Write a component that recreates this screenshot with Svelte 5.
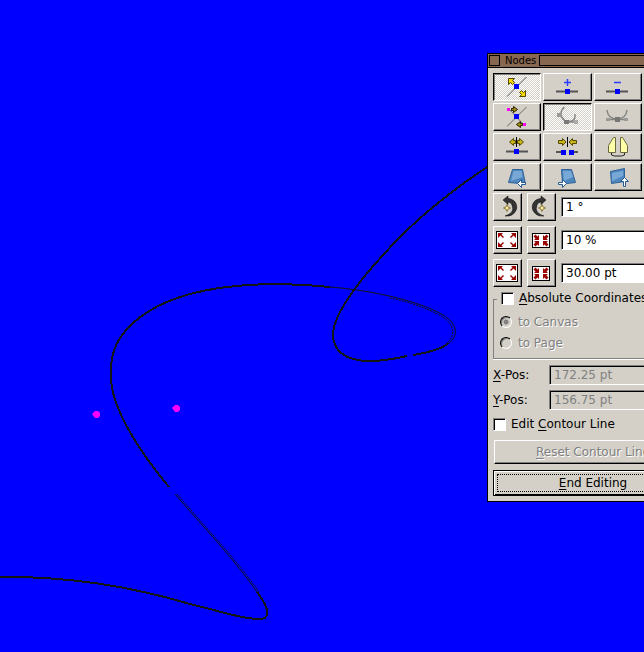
<script lang="ts">
	const tools = [
		{ icon: 'move', label: 'Move node', pressed: true },
		{ icon: 'add', label: 'Add node' },
		{ icon: 'remove', label: 'Delete node' },
		{ icon: 'control', label: 'Move control point' },
		{ icon: 'smooth', label: 'Smooth node', pressed: true, disabled: true },
		{ icon: 'symmetric', label: 'Symmetric node', disabled: true },
		{ icon: 'split', label: 'Split node' },
		{ icon: 'join', label: 'Join nodes' },
		{ icon: 'mirror', label: 'Mirror' },
		{ icon: 'shear-left', label: 'Shear left' },
		{ icon: 'shear-right', label: 'Shear right' },
		{ icon: 'shear-up', label: 'Shear up' }
	];

	let steps = $state([
		{ kind: 'rotate', label: 'Rotation step', less: 'Rotate left', more: 'Rotate right', value: '1 °' },
		{ kind: 'scale', label: 'Zoom factor', less: 'Enlarge', more: 'Shrink', value: '10 %' },
		{ kind: 'scale', label: 'Step size', less: 'Grow by step', more: 'Shrink by step', value: '30.00 pt' }
	]);

	let absolute = $state(false);
	let editContour = $state(false);
	let origin = $state('canvas');

	// the four corner arrows are one shape, flipped
	const growFlips = ['', 'translate(24 0) scale(-1 1)', 'translate(0 24) scale(1 -1)', 'translate(24 24) scale(-1 -1)'];
	const shrinkFlips = ['', 'translate(24 0) scale(-1 1)', 'translate(0 25) scale(1 -1)', 'translate(24 25) scale(-1 -1)'];
</script>

{#snippet toolIcon(name: string)}
	<svg width="24" height="24" viewBox="0 0 24 24" aria-hidden="true">
		{#if name === 'move'}
			<path d="M2 21.500L21.500 2" stroke="#555" fill="none" />
			<rect x="9" y="9" width="5" height="5" fill="#00f" />
			<path d="M3.500 3.500h6l-2 2 2 2-2 2-2-2-2 2z" fill="#f4d800" stroke="#554800" />
			<path d="M20.500 21.500h-6l2-2-2-2 2-2 2 2 2-2z" fill="#f4d800" stroke="#554800" />
		{:else if name === 'add' || name === 'remove'}
			<path d={name === 'add' ? 'M8 7.500h7M11.500 4v7' : 'M8 7.500h7'} stroke="#2a3cff" stroke-width="1.500" fill="none" />
			<path d="M0 16.500h22" stroke="#555" stroke-width="2" />
			<rect x="9" y="14" width="5" height="5" fill="#00f" />
		{:else if name === 'control'}
			<path d="M2 21.500L21.500 2M5 5l14 15" stroke="#666" fill="none" />
			<rect x="9" y="9" width="5" height="5" fill="#00f" />
			<rect x="2" y="3" width="3" height="3" fill="#f0f" />
			<rect x="18" y="18" width="3" height="3" fill="#f0f" />
			<path d="M6.500 3.500h2v-2l4 3-4 3v-2h-2z" fill="#a08c10" stroke="#2b2400" />
			<path d="M17.500 18.500h-2v-2l-4 3 4 3v-2h2z" fill="#a08c10" stroke="#2b2400" />
		{:else if name === 'smooth'}
			<path d="M8.500 2Q1 9 9 16Q20 18 19 9M3 9l7 8h12" stroke="#858582" stroke-width="1.500" fill="none" />
			<rect x="8" y="15" width="5" height="4" fill="#777" />
			<rect x="1" y="8" width="5" height="4" fill="#999" />
			<rect x="18" y="15" width="4" height="4" fill="#aaa" />
		{:else if name === 'symmetric'}
			<path d="M1 5Q2 14 11 14T21 5M0 14.500h22" stroke="#85857f" stroke-width="1.500" fill="none" />
			<rect x="9" y="12" width="5" height="5" fill="#777" />
			<rect x="0" y="13" width="4" height="3" fill="#999" />
			<rect x="18" y="13" width="4" height="3" fill="#999" />
		{:else if name === 'split'}
			<path d="M1 16.500h22" stroke="#555" stroke-width="2" />
			<rect x="9" y="14" width="5" height="5" fill="#00f" />
			<path d="M11.500 2v10" stroke="#000" />
			<path d="M4.500 7l4-3.500v2h2v3h-2v2z" fill="#c8b414" stroke="#554a00" />
			<path d="M18.500 7l-4-3.500v2h-2v3h2v2z" fill="#c8b414" stroke="#554a00" />
		{:else if name === 'join'}
			<path d="M0 17h6M17 17h5" stroke="#555" stroke-width="2" />
			<rect x="5" y="15" width="5" height="5" fill="#00f" />
			<rect x="13" y="15" width="5" height="5" fill="#00f" />
			<path d="M11.500 2v10" stroke="#000" />
			<path d="M10 7L6.500 3.500v2h-4v3h4v2z" fill="#c8b414" stroke="#554a00" />
			<path d="M13 7l3.500-3.500v2h4v3h-4v2z" fill="#c8b414" stroke="#554a00" />
		{:else if name === 'mirror'}
			<path d="M2.500 17.500v-7l5-8h2v15z" fill="#ffffa8" stroke="#6a6840" />
			<path d="M21.500 17.500v-7l-5-8h-2v15z" fill="#ffffa8" stroke="#6a6840" />
			<path d="M5.500 18v2l3 1h7l3-1v-2" stroke="#222" fill="none" />
		{:else if name === 'shear-left'}
			<path d="M7.500 4.500h10l3 14.500L3.500 17.500z" fill="#4f86bd" stroke="#2f6299" />
			<path d="M8.500 6h8l1 6L6 16z" fill="#78a9d6" />
			<path d="M12.500 18.500l4-4v3h4v2h-4v3z" fill="#fff" stroke="#245a96" />
		{:else if name === 'shear-right'}
			<path d="M5.500 4.500h10l4 13L6.500 19z" fill="#4f86bd" stroke="#2f6299" />
			<path d="M7 6h8l2 6L8 16z" fill="#78a9d6" />
			<path d="M10.500 18.500l-4-4v3h-4v2h4v3z" fill="#fff" stroke="#245a96" />
		{:else}
			<path d="M4.500 6.500l14-3v13l-13 2z" fill="#4f86bd" stroke="#2f6299" />
			<path d="M6 8l11-2v5L6 16z" fill="#78a9d6" />
			<path d="M18.500 12.500l4 4h-3v5h-2v-5h-3z" fill="#fff" stroke="#245a96" />
		{/if}
	</svg>
{/snippet}

{#snippet stepIcon(kind: string, more: boolean)}
	<svg width="25" height="24" viewBox="0 0 25 24" aria-hidden="true">
		{#if kind === 'rotate'}
			<g transform={more ? 'translate(25 0) scale(-1 1)' : undefined}>
				<path d="M8 5l5-4v2.500C21 4 24 12 20 17C18 20 15 21.500 10 21C16 19 18.500 16 17.500 12C17 9 16 7.500 13 7v2.500z" fill="#333" stroke="#000" stroke-width="0.500" />
				<path d="M12 9.500l1 2.500 2.500 1-2.500 1-1 2.500-1-2.500-2.500-1 2.500-1z" fill="#fff0a0" stroke="#7a6424" stroke-width="0.800" />
			</g>
		{:else if more}
			<rect x="3.500" y="5.500" width="17" height="14" fill="#fff" stroke="#000" />
			{#each shrinkFlips as flip}
				<path d="M10 7v5H5l1.500-1.500L4.500 8.500l2-2 2 2z" transform={flip} fill="#900" />
			{/each}
		{:else}
			<rect x="1.500" y="3.500" width="21" height="17" fill="#fff" stroke="#000" />
			{#each growFlips as flip}
				<path d="M3 5h5L6.500 6.500l2.500 2.500-1 1-2.500-2.500L3 10z" transform={flip} fill="#900" />
			{/each}
		{/if}
	</svg>
{/snippet}

<main class="desktop">
	<svg class="drawing" aria-hidden="true">
		<g class="curve">
			<path d="M0 577C75 576 143 590 190 604C220 611 242 619 258 619C271 620 270 609 257 592" />
			<path d="M169 487C145 458 121 423 113 393C109 374 110 353 120 338C134 317 160 302 190 294C230 283 285 282 330 287" />
			<path d="M448 344C439 350 426 353 413 355M407 356C394 359 382 361 370 361C343 361 332 349 333 332C336 310 360 278 400 237C428 209 460 185 490 165" />
		</g>
		<g class="curve fine">
			<path d="M257 592C235 560 205 529 175 494M330 287C370 290 420 301 443 315C458 324 459 336 448 344" />
			<path class="broken" d="M259 592C237 560 207 529 177 494M390 298C405 301 425 307 441 316C455 324 456 336 446 344" />
		</g>
		<g fill="#f0f">
			<path d="M92 414l3-3h3l2 2v3l-2 2h-3z" />
			<path d="M172 408l3-3h3l2 2v3l-2 2h-3z" />
		</g>
	</svg>

	<section class="window">
		<header class="titlebar">
			<button class="close" aria-label="Close"></button>
			<h1>Nodes</h1>
			<span class="grip"></span>
		</header>

		<form class="body" onsubmit={(e) => e.preventDefault()}>
			<div class="tools">
				{#each tools as tool}
					<button
						type="button"
						class="btn"
						class:pressed={tool.pressed}
						disabled={tool.disabled}
						aria-label={tool.label}
					>
						{@render toolIcon(tool.icon)}
					</button>
				{/each}
			</div>

			<div class="steps">
				{#each steps as step}
					<div class="step">
						<button type="button" class="btn" aria-label={step.less}>{@render stepIcon(step.kind, false)}</button>
						<button type="button" class="btn" aria-label={step.more}>{@render stepIcon(step.kind, true)}</button>
						<input type="text" aria-label={step.label} bind:value={step.value} />
					</div>
				{/each}
			</div>

			<fieldset>
				<legend>
					<label class="check">
						<input type="checkbox" bind:checked={absolute} />
						<span><u>A</u>bsolute Coordinates</span>
					</label>
				</legend>
				<label class="radio">
					<input type="radio" name="origin" value="canvas" bind:group={origin} disabled={!absolute} />
					to Canvas
				</label>
				<label class="radio">
					<input type="radio" name="origin" value="page" bind:group={origin} disabled={!absolute} />
					to Page
				</label>
			</fieldset>

			<div class="fields">
				<label for="x-pos"><u>X</u>-Pos:</label>
				<input id="x-pos" type="text" value="172.25 pt" disabled />
				<label for="y-pos"><u>Y</u>-Pos:</label>
				<input id="y-pos" type="text" value="156.75 pt" disabled />
			</div>

			<label class="check contour">
				<input type="checkbox" bind:checked={editContour} />
				<span>Edit <u>C</u>ontour Line</span>
			</label>

			<button type="button" class="btn reset" disabled><span><u>R</u>eset Contour Line</span></button>
			<button type="submit" class="end"><span><u>E</u>nd Editing</span></button>
		</form>
	</section>
</main>

<style>
	:global(body) {
		background: #00f;
	}

	.desktop {
		position: relative;
		min-height: 100vh;
		overflow: hidden;
		background: #00f;
		font-family: 'DejaVu Sans', Verdana, sans-serif;
		font-size: 12px;
		color: #000;
	}

	.drawing {
		position: absolute;
		inset: 0;
		width: 100%;
		height: 100%;
	}

	.curve {
		fill: none;
		stroke: #141414;
		stroke-width: 2;
		shape-rendering: crispEdges;
	}

	.fine {
		stroke-width: 1;
		shape-rendering: auto;
	}

	.broken {
		stroke-dasharray: 2 1;
	}

	.window {
		position: absolute;
		left: 487px;
		top: 53px;
		width: 210px;
		border: 1px solid #000;
		background: #d4d0c8;
	}

	.titlebar {
		display: flex;
		align-items: center;
		height: 13px;
		padding-left: 1px;
		background: #886750;
		border-bottom: 1px solid #000;
	}

	.close {
		width: 11px;
		height: 11px;
		padding: 0;
		background: #886750;
		border: 1px solid #000;
		border-radius: 0;
	}

	h1 {
		margin: 0 3px 0 5px;
		font-size: 10px;
		font-weight: normal;
		line-height: 13px;
	}

	.grip {
		flex: 1;
		height: 9px;
		border: 1px solid #000;
	}

	.body {
		padding: 5px;
	}

	.tools {
		display: grid;
		grid-template-columns: 48px 49px 48px;
		gap: 2px;
	}

	button {
		font: inherit;
		color: inherit;
	}

	.btn {
		display: flex;
		align-items: center;
		justify-content: center;
		height: 28px;
		padding: 0;
		background: #d4d0c8;
		border: 1px solid;
		border-color: #fff #000 #000 #fff;
		border-radius: 0;
		box-shadow: inset -1px -1px 0 #808080;
	}

	.btn.pressed {
		border-color: #000 #fff #fff #000;
		box-shadow: inset 1px 1px 0 #808080;
		background: repeating-conic-gradient(#d4d0c8 0 25%, #fff 0 50%) 0 0 / 2px 2px;
	}

	.steps {
		display: flex;
		flex-direction: column;
		gap: 5px;
		margin-top: 2px;
	}

	.step {
		display: flex;
		align-items: center;
		gap: 5px;
	}

	.step .btn {
		flex: none;
		width: 29px;
	}

	input[type='text'] {
		flex: 1;
		box-sizing: border-box;
		min-width: 0;
		height: 20px;
		padding: 0 4px;
		font: inherit;
		color: #000;
		background: #fff;
		border: 1px solid;
		border-color: #808080 #fff #fff #808080;
		border-radius: 0;
		box-shadow: inset 1px 1px 0 #000;
	}

	input[type='text']:disabled {
		color: #808080;
		background: #d4d0c8;
	}

	fieldset {
		min-width: 0;
		margin: 4px 0 0;
		padding: 4px 6px 5px;
		border: 1px solid #808080;
		box-shadow: 0 1px 0 #fff;
	}

	legend {
		height: 16px;
		margin-left: -3px;
		padding: 0 4px;
		background: #d4d0c8;
	}

	.check {
		display: flex;
		align-items: center;
		gap: 5px;
		line-height: 15px;
		white-space: nowrap;
	}

	.check input {
		appearance: none;
		width: 13px;
		height: 13px;
		margin: 0;
		background: #fff;
		border: 1px solid;
		border-color: #808080 #fff #fff #808080;
		box-shadow: inset 1px 1px 0 #000;
	}

	.check input:checked {
		background: radial-gradient(#000 3px, #fff 4px);
	}

	.radio {
		display: flex;
		align-items: center;
		gap: 6px;
		height: 21px;
		color: #808080;
		text-shadow: 1px 1px 0 #fff;
	}

	.radio input {
		appearance: none;
		width: 12px;
		height: 12px;
		margin: 0;
		border: 1px solid;
		border-color: #000 #fff #fff #000;
		border-radius: 50%;
		box-shadow: inset 1px 1px 0 #808080;
	}

	.radio input:checked {
		background: radial-gradient(#808080 2px, transparent 3px);
	}

	.fields {
		display: grid;
		grid-template-columns: 56px 1fr;
		align-items: center;
		row-gap: 5px;
		margin-top: 6px;
	}

	.contour {
		margin-top: 7px;
	}

	.reset {
		width: calc(100% - 2px);
		height: 24px;
		margin: 8px 1px 0;
		color: #808080;
		text-shadow: 1px 1px 0 #fff;
	}

	.end {
		display: flex;
		width: 100%;
		height: 26px;
		margin-top: 6px;
		padding: 3px;
		background: #d4d0c8;
		border: 1px solid #000;
		border-radius: 0;
		box-shadow: inset 1px 1px 0 #fff, inset -1px -1px 0 #000;
	}

	.end span {
		flex: 1;
		align-self: stretch;
		line-height: 17px;
		border: 1px dotted #000;
	}

	u {
		text-underline-offset: 2px;
	}
</style>
